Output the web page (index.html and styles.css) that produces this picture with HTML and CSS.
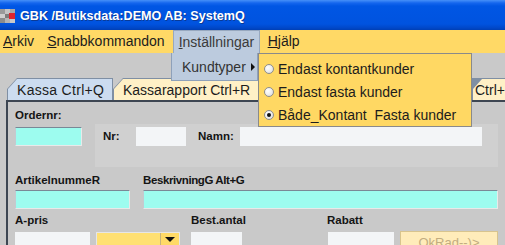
FILE: index.html
```html
<!DOCTYPE html>
<html lang="sv">
<head>
    <meta charset="UTF-8">
    <title>SystemQ</title>
    <link rel="stylesheet" href="styles.css">
</head>
<body>
    <div class="window">
        <div class="titlebar">
            <svg class="appicon" width="15" height="14" viewBox="0 0 15 14">
                <rect x="0" y="0" width="5" height="5" fill="#9a9a9a"/>
                <rect x="5" y="0" width="5" height="5" fill="#c4c4c4"/>
                <rect x="0" y="5" width="5" height="4" fill="#cfcfcf"/>
                <rect x="5" y="5" width="4" height="4" fill="#7d7d7d"/>
                <rect x="0" y="9" width="5" height="5" fill="#8c8c8c"/>
                <rect x="5" y="9" width="5" height="5" fill="#b5b5b5"/>
                <rect x="10" y="0" width="5" height="4" fill="#a9a9a9"/>
                <rect x="9" y="4" width="6" height="6" fill="#e0242e"/>
                <rect x="10" y="10" width="5" height="4" fill="#c9c9c9"/>
            </svg>
            <span class="title">GBK /Butiksdata:DEMO AB: SystemQ</span>
        </div>

        <div class="menubar">
            <span class="menu first"><u>A</u>rkiv</span>
            <span class="menu"><u>S</u>nabbkommandon</span>
            <span class="menu open"><u>I</u>nställningar</span>
            <span class="menu"><u>H</u>jälp</span>
        </div>

        <div class="tabs">
            <div class="tab selected"><span>Kassa Ctrl+Q</span></div>
            <div class="tab wide"><span>Kassarapport Ctrl+R</span></div>
            <div class="tab last"><span>Ctrl+</span></div>
        </div>

        <div class="panel">
            <div class="row-order">
                <div class="field w-order">
                    <label>Ordernr:</label>
                    <div class="input cyan"></div>
                </div>
                <div class="customer">
                    <span class="lbl lbl-nr">Nr:</span>
                    <div class="input white w-nr"></div>
                    <span class="lbl lbl-namn">Namn:</span>
                    <div class="input white w-namn"></div>
                </div>
            </div>

            <div class="row row-article">
                <div class="field w-art">
                    <label>ArtikelnummeR</label>
                    <div class="input cyan"></div>
                </div>
                <div class="field w-desc">
                    <label class="tight">BeskrivningG Alt+G</label>
                    <div class="input cyan"></div>
                </div>
            </div>

            <div class="row row-price">
                <div class="field w-price">
                    <label>A-pris</label>
                    <div class="input white"></div>
                </div>
                <div class="field w-combo">
                    <label>&nbsp;</label>
                    <div class="combo">
                        <div class="combo-value"></div>
                        <div class="combo-arrow"><span class="tri-down"></span></div>
                    </div>
                </div>
                <div class="field w-qty">
                    <label>Best.antal</label>
                    <div class="input white"></div>
                </div>
                <div class="field w-rabatt">
                    <label>Rabatt</label>
                    <div class="input white indent"></div>
                </div>
                <div class="field w-btn">
                    <label>&nbsp;</label>
                    <button class="okrad" disabled>OkRad--)&gt;</button>
                </div>
            </div>
        </div>

        <!-- open menu: Inställningar > Kundtyper -->
        <div class="submenu">
            <div class="submenu-item">Kundtyper<span class="tri-right"></span></div>
        </div>
        <div class="popup">
            <div class="popup-item"><span class="radio"></span>Endast kontantkunder</div>
            <div class="popup-item"><span class="radio"></span>Endast fasta kunder</div>
            <div class="popup-item"><span class="radio checked"></span>Både_Kontant  Fasta kunder</div>
        </div>
    </div>
</body>
</html>
```

FILE: styles.css
```css
body {
    margin: 0;
    width: 505px;
    height: 245px;
    overflow: hidden;
    background: #c9c9c9;
    font-family: "Liberation Sans", Arial, sans-serif;
    color: #1c1c1c;
}

.window {
    position: relative;
    height: 245px;
}

/* title bar */
.titlebar {
    height: 30px;
    box-sizing: border-box;
    padding-top: 2px;
    display: flex;
    align-items: center;
    background: linear-gradient(#4690f8 0, #1466ee 3px, #0056e4 6px, #0053df 24px, #0047c8 28px, #003fb4 30px);
}

.appicon {
    flex: none;
    margin-right: 5px;
}

.title {
    color: #fff;
    font-weight: bold;
    font-size: 12.6px;
    text-shadow: 1px 1px 0 #0a3a96;
}

/* menu bar */
.menubar {
    height: 23px;
    display: flex;
    background: #ffd966;
    font-size: 14px;
    line-height: 23px;
}

.menu {
    padding: 0 6px;
    margin-right: 2px;
    box-sizing: border-box;
    height: 23px;
}

.menu.first {
    padding-left: 3px;
    margin-right: 1px;
}

.menu.open {
    background: #bccbde;
    border: 1px solid #97a8bf;
    border-bottom: none;
    line-height: 22px;
    padding: 0 5px;
    width: 87px;
    color: #3a3a3a;
}

/* tabs */
.tabs {
    display: flex;
    margin-top: 25px;
    padding-left: 7px;
    height: 22px;
}

.tab {
    position: relative;
    flex: none;
    height: 22px;
    box-sizing: border-box;
    padding: 2px 0 0 10px;
    line-height: 20px;
    font-size: 14px;
    background: #7f8fa4;
    clip-path: polygon(0 100%, 0 11px, 10px 0, 100% 0, 100% 100%);
}

.tab::before {
    content: "";
    position: absolute;
    left: 1px;
    top: 1px;
    right: 1px;
    bottom: 0;
    background: #fff0c6;
    clip-path: polygon(0 100%, 0 10px, 9px 0, 100% 0, 100% 100%);
}

.tab span {
    position: relative;
    white-space: nowrap;
}

.tab.selected {
    width: 106px;
    letter-spacing: 0.3px;
}

.tab.selected::before {
    background: #ccdcf0;
}

.tab.wide {
    width: 149px;
}

.tab.last {
    margin-left: auto;
    margin-right: -12px;
    width: 45px;
    padding-left: 3px;
    clip-path: none;
}

/* main panel */
.panel {
    margin-left: 6px;
    border-top: 2px solid #3d4652;
    border-left: 2px solid #3d4652;
    padding: 6px 0 0 7px;
    height: 200px;
}

label,
.lbl {
    display: block;
    font-weight: bold;
    font-size: 11.5px;
    line-height: 14px;
    color: #141414;
    white-space: nowrap;
}

label.tight {
    letter-spacing: -0.4px;
}

.field {
    display: flex;
    flex-direction: column;
    flex: none;
}

.input {
    height: 19px;
    box-sizing: border-box;
}

.cyan {
    background: #9dfcef;
    border-top: 1px solid #7a8896;
    border-left: 1px solid #c3cad1;
    border-right: 1px solid #e9e9e9;
    border-bottom: 1px solid #e9e9e9;
}

.white {
    background: #f3f5f7;
}

.row-order {
    display: flex;
}

.w-order {
    width: 67px;
    gap: 5px;
}

.customer {
    margin-left: 13px;
    margin-top: 16px;
    width: 403px;
    height: 43px;
    box-sizing: border-box;
    padding: 3px 0 0 8px;
    background: #d0d0d0;
    display: flex;
    align-items: flex-start;
}

.customer .lbl {
    line-height: 19px;
}

.lbl-nr {
    width: 33px;
}

.lbl-namn {
    margin-left: 12px;
    width: 42px;
}

.w-nr {
    width: 50px;
}

.w-namn {
    width: 242px;
}

.row {
    display: flex;
}

.row-article {
    margin-top: 6px;
}

.row-article .field {
    gap: 3px;
}

.w-art {
    width: 115px;
}

.w-desc {
    width: 355px;
    margin-left: 13px;
}

.row-price {
    margin-top: 4px;
}

.row-price .field {
    gap: 5px;
}

.w-price {
    width: 75px;
}

.w-combo {
    width: 84px;
    margin-left: 6px;
}

.w-qty {
    width: 51px;
    margin-left: 11px;
}

.w-rabatt {
    width: 67px;
    margin-left: 85px;
}

.indent {
    margin-left: 1px;
}

.w-btn {
    width: 98px;
    margin-left: 6px;
}

.combo {
    display: flex;
    height: 19px;
    border: 1px solid #e6e6e6;
    box-sizing: border-box;
}

.combo-value {
    flex: 1;
    background: #ffe072;
}

.combo-arrow {
    width: 19px;
    background: #ffda66;
    border-left: 1px solid #c7b37a;
    display: flex;
    justify-content: center;
    padding-top: 4px;
    box-sizing: border-box;
}

.tri-down {
    width: 0;
    height: 0;
    border-left: 5px solid transparent;
    border-right: 5px solid transparent;
    border-top: 5px solid #111;
}

.okrad {
    margin-top: -1px;
    height: 22px;
    width: 98px;
    background: #ffecba;
    border: 1px solid #d8c48e;
    color: #c2ad80;
    font-family: "Liberation Sans", Arial, sans-serif;
    font-size: 13px;
    padding: 0;
}

/* open menus, drawn over the window */
.submenu {
    position: absolute;
    left: 171px;
    top: 53px;
    width: 87px;
    height: 28px;
    box-sizing: border-box;
    background: #bccbde;
    border: 1px solid #8ea1ba;
    border-top: none;
}

.submenu-item {
    display: flex;
    align-items: center;
    padding-left: 10px;
    height: 27px;
    font-size: 14px;
    color: #333;
}

.tri-right {
    width: 0;
    height: 0;
    margin-left: 5px;
    border-top: 4px solid transparent;
    border-bottom: 4px solid transparent;
    border-left: 4px solid #111;
}

.popup {
    position: absolute;
    left: 258px;
    top: 53px;
    width: 214px;
    height: 74px;
    box-sizing: border-box;
    padding-top: 3px;
    background: #ffd863;
    border: 1px solid #8a8a8a;
}

.popup-item {
    display: flex;
    align-items: center;
    height: 23px;
    padding-left: 5px;
    font-size: 14px;
    white-space: pre;
}

.radio {
    position: relative;
    width: 10px;
    height: 10px;
    box-sizing: border-box;
    margin-right: 4px;
    border-radius: 50%;
    border: 1px solid #8d8d8d;
    background: radial-gradient(circle at 35% 35%, #ffffff 0, #f2f2f2 40%, #d4d4d4 100%);
}

.radio.checked::after {
    content: "";
    position: absolute;
    left: 2px;
    top: 2px;
    width: 4px;
    height: 4px;
    border-radius: 50%;
    background: #111;
}
```
